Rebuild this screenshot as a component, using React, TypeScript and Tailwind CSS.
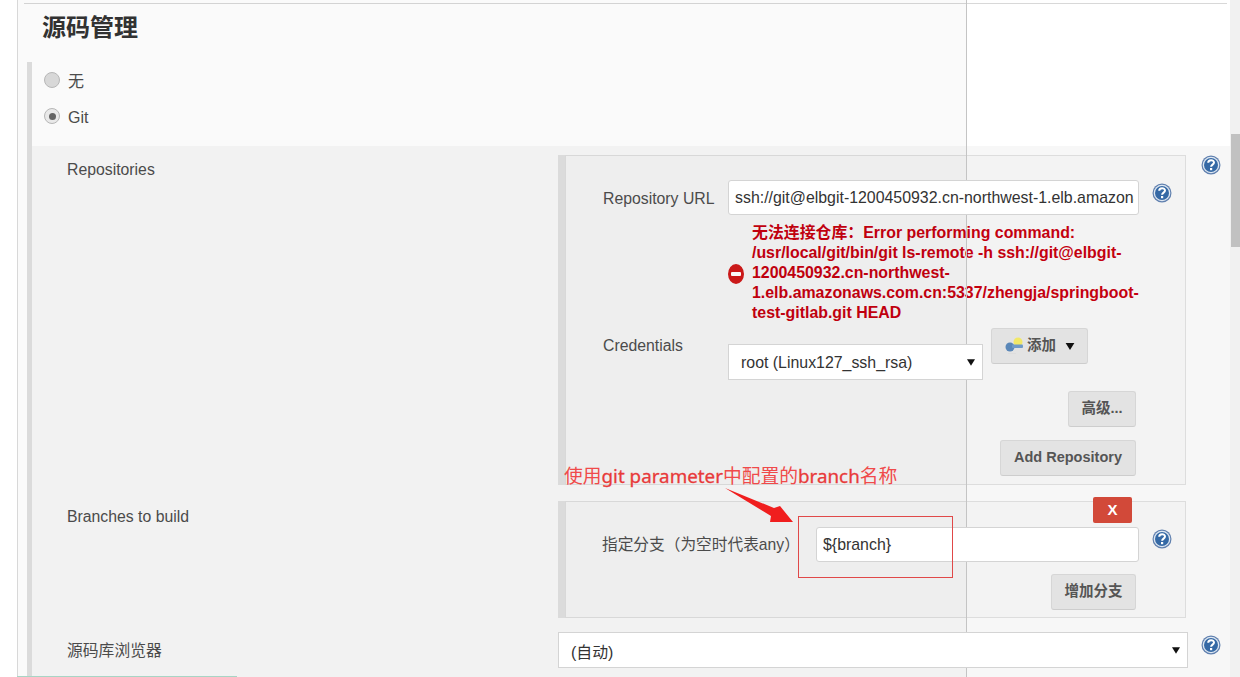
import React from "react";

const HelpIcon = ({ className = "" }: { className?: string }) => (
  <svg viewBox="0 0 20 20" className={`w-5 h-5 shrink-0 ${className}`}>
    <circle cx="10" cy="10" r="9.5" fill="#5f7fae" />
    <circle cx="10" cy="10" r="8.3" fill="#dfe8f2" />
    <circle cx="10" cy="10" r="7" fill="#3569a5" />
    <path d="M7.2 7.8c0-3.4 5.8-3.4 5.8-.2 0 2-2.9 2.1-2.9 4.2" fill="none" stroke="#fff" strokeWidth="2" />
    <rect x="9" y="13" width="2.2" height="2.2" fill="#fff" />
  </svg>
);

const KeyIcon = () => (
  <svg viewBox="0 0 20 20" className="w-5 h-5 shrink-0">
    <circle cx="14" cy="6" r="4.5" fill="#f2e867" />
    <circle cx="6" cy="11" r="4.5" fill="#5a87b8" />
    <rect x="8" y="8.5" width="11" height="3.5" rx="1" fill="#6f9ac7" />
    <rect x="4" y="17" width="8" height="1" fill="#dddddd" />
  </svg>
);

const Caret = ({ className = "" }: { className?: string }) => (
  <svg viewBox="0 0 10 8" className={`shrink-0 ${className}`}>
    <path d="M0 0h10L5 8z" fill="#111" />
  </svg>
);

const Radio = ({ label, checked }: { label: string; checked?: boolean }) => (
  <div className="h-9 flex items-center gap-2 pl-3">
    <span className={`w-4 h-4 -mt-[4px] rounded-full border border-[#bbbbbb] flex items-center justify-center ${checked ? "bg-[#eeeeee]" : "bg-[#dddddd]"}`}>
      {checked && <span className="w-[7px] h-[7px] rounded-full bg-[#666666]" />}
    </span>
    <span className="text-[16px] text-[#4d4d4d]">{label}</span>
  </div>
);

const Btn = ({ children, className = "" }: { children: React.ReactNode; className?: string }) => (
  <button className={`h-9 rounded-[3px] border border-[#d6d6d6] border-b-[#cdcdcd] bg-[#e3e3e3] text-[14.5px] font-bold text-[#555555] flex items-center justify-center ${className}`}>
    {children}
  </button>
);

const TextInput = ({ value, className = "" }: { value: string; className?: string }) => (
  <input
    type="text"
    readOnly
    value={value}
    className={`relative z-10 h-[35px] rounded-[3px] border border-[#d4d4d4] bg-white pl-[6px] pr-[4px] text-[15.9px] text-[#333333] outline-none ${className}`}
  />
);

const SelectBox = ({ value, className = "", textClass = "" }: { value: string; className?: string; textClass?: string }) => (
  <div className={`relative z-10 h-[36px] border border-[#d4d4d4] bg-white flex items-center justify-between text-[15.9px] text-[#333333] ${className}`}>
    <span className={textClass}>{value}</span>
    <Caret className="w-2 h-[7px]" />
  </div>
);

export default function App() {
  return (
    <div className="relative w-[1240px] h-[677px] overflow-hidden bg-white flex font-['Liberation_Sans','Noto_Sans_CJK_SC',sans-serif]">
      <div className="w-[18px] shrink-0 border-r border-[#d8d8d8]" />

      <div className="flex-1 flex flex-col min-w-0">
        <div className="mt-[3px] ml-[6px] mr-[3px] h-px shrink-0 bg-[#d8d8d8]" />
        <h2 className="mt-[2px] ml-6 h-[44px] shrink-0 text-[24px] leading-[44px] font-bold text-[#333333]">源码管理</h2>

        <div className="mt-3 ml-[9px] flex-1 border-l-[5px] border-[#e0e0e0] flex flex-col">
          <div className="pt-[2px] shrink-0">
            <Radio label="无" />
            <Radio label="Git" checked />
          </div>
          <div className="mt-[10px] flex-1 bg-[#f7f7f7] pt-[9px]">
            <div className="flex">
              <div className="w-[526px] shrink-0 pl-[35px] pt-[5px] text-[15.8px] leading-5 text-[#4d4d4d]">Repositories</div>
              <div className="w-[628px] shrink-0 border-l-[7px] border-[#e0e0e0]">
                <div className="h-[330px] border border-[#dddddd] bg-[#f3f3f3] pt-[24px] pl-[37px]">
                  <div className="flex items-start">
                    <div className="w-[125px] shrink-0 pt-[9px] text-[15.8px] leading-5 text-[#4d4d4d]">Repository URL</div>
                    <TextInput value="ssh://git@elbgit-1200450932.cn-northwest-1.elb.amazonaws.com.cn:5337/zhengja/springboot-test-gitlab.git" className="w-[411px]" />
                    <HelpIcon className="ml-[13px] mt-[3px]" />
                  </div>
                  <div className="ml-[125px] mt-2 flex items-center w-[416px] text-[15.9px] leading-[20px] font-bold text-[#c4000f]">
                    <svg viewBox="0 0 16 20" className="w-4 h-5 shrink-0 mr-[8px] mt-[2px]">
                      <ellipse cx="8" cy="10" rx="8" ry="10" fill="#cf1a1a" />
                      <rect x="3" y="8" width="10" height="4" rx="1" fill="#fff" />
                    </svg>
                    <div>无法连接仓库：Error performing command: /usr/local/git/bin/git ls-remote -h ssh://git@elbgit-1200450932.cn-northwest-1.elb.amazonaws.com.cn:5337/zhengja/springboot-test-gitlab.git HEAD</div>
                  </div>
                  <div className="mt-[5px] flex items-start">
                    <div className="w-[125px] shrink-0 pt-[8px] text-[15.8px] leading-5 text-[#4d4d4d]">Credentials</div>
                    <SelectBox value="root (Linux127_ssh_rsa)" className="w-[255px] mt-[16px] pl-3 pr-[7px]" textClass="pt-px" />
                    <Btn className="ml-2 w-[97px]">
                      <KeyIcon />
                      <span className="ml-[3px]">添加</span>
                      <Caret className="ml-[9px] w-[10px] h-[7px]" />
                    </Btn>
                  </div>
                  <div className="mt-[11px] w-[533px] flex flex-col items-end gap-[13px]">
                    <Btn className="w-[68px]">高级...</Btn>
                    <Btn className="w-[136px]">Add Repository</Btn>
                  </div>
                </div>
              </div>
              <HelpIcon className="ml-[15px]" />
            </div>

            <div className="flex mt-[16px]">
              <div className="w-[526px] shrink-0 pl-[35px] pt-[6px] text-[15.8px] leading-5 text-[#4d4d4d]">Branches to build</div>
              <div className="w-[628px] shrink-0 border-l-[7px] border-[#e0e0e0]">
                <div className="relative h-[117px] border border-[#dddddd] bg-[#f3f3f3] pt-[25px] pl-[36px]">
                  <button className="absolute right-[53px] -top-[5px] w-[39px] h-[26px] rounded-[2px] bg-[#d24939] text-[15px] font-bold text-white">X</button>
                  <div className="flex items-start">
                    <div className="w-[214px] shrink-0 pt-[8px] text-[15.7px] leading-5 whitespace-nowrap text-[#4d4d4d]">指定分支（为空时代表any）</div>
                    <TextInput value="${branch}" className="w-[323px]" />
                    <HelpIcon className="ml-[13px] mt-[2px]" />
                  </div>
                  <div className="mt-[12px] w-[534px] flex justify-end">
                    <Btn className="w-[85px]">增加分支</Btn>
                  </div>
                </div>
              </div>
            </div>

            <div className="flex mt-[14px]">
              <div className="w-[526px] shrink-0 pl-[35px] pt-[9px] text-[15.8px] leading-5 text-[#4d4d4d]">源码库浏览器</div>
              <SelectBox value="(自动)" className="w-[630px] pl-3 pr-[7px]" textClass="pt-[5px]" />
              <HelpIcon className="ml-[13px] mt-[3px]" />
            </div>
          </div>
        </div>
      </div>

      <div className="w-[10px] shrink-0 bg-[#f1f1f1] pl-px pt-[134px]">
        <div className="h-[113px] bg-[#c1c1c1]" />
      </div>

      {/* screenshot overlay, a slightly darker sheet ending at x=966 */}
      <div className="absolute left-[18px] top-0 w-[949px] h-full border-r border-[#c4c4c4] bg-black/[0.02] pointer-events-none" />

      {/* red annotations pasted on top */}
      <div className="absolute left-[564px] top-[464px] z-20 whitespace-nowrap text-[18.8px] leading-6 text-[#f04a4a] font-['Noto_Sans','Noto_Sans_CJK_SC',sans-serif]">
        使用<span className="text-[#e83a3a] [-webkit-text-stroke:0.3px_#e83a3a]">git parameter</span>中配置的<span className="text-[#e83a3a] [-webkit-text-stroke:0.3px_#e83a3a]">branch</span>名称
      </div>
      <svg viewBox="0 0 70 36" className="absolute left-[724px] top-[487px] z-20 w-[70px] h-[36px]">
        <path d="M1 1 50 21 56 19 69 35 46 35 47 29Z" fill="#f01e1e" />
      </svg>
      <div className="absolute left-[798px] top-[516px] z-20 w-[155px] h-[62px] border border-[#e04848]" />
      <div className="absolute left-[17px] bottom-0 w-[220px] h-px bg-[#a8d5c5]" />
    </div>
  );
}
